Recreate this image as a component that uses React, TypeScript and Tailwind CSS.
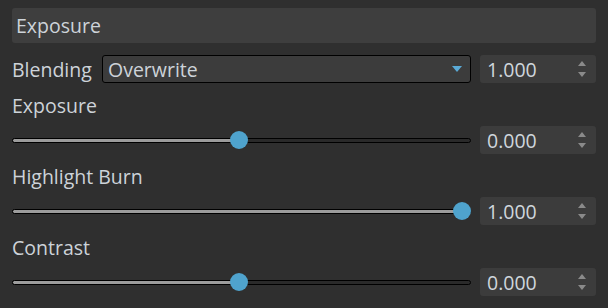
const font = { fontFamily: '"Open Sans", "Noto Sans", sans-serif' };

const SpinArrows = () => (
  <div className="flex flex-col items-center gap-[6px] pr-[10px]">
    <svg width="8" height="5" viewBox="0 0 8 5">
      <path d="M4 0 L8 5 L0 5 Z" fill="#8a8a8a" />
    </svg>
    <svg width="8" height="5" viewBox="0 0 8 5">
      <path d="M0 0 L8 0 L4 5 Z" fill="#8a8a8a" />
    </svg>
  </div>
);

const SpinBox = ({ value }: { value: string }) => (
  <div className="ml-[9px] flex h-[28px] w-[116px] shrink-0 items-center justify-between rounded-[3px] bg-[#3c3c3c]">
    <span className="pl-[7px] pt-[2px] text-[19.5px] leading-none text-[#cfd6dc]">{value}</span>
    <SpinArrows />
  </div>
);

const Slider = ({ pct }: { pct: number }) => (
  <div className="relative h-[18px] flex-1">
    <div className="absolute left-0 right-0 top-[7px] h-[5px] rounded-full border border-black bg-[#2a2a2a]" />
    <div
      className="absolute left-0 top-[7px] h-[5px] rounded-l-full border border-black bg-[#9c9c9c]"
      style={{ width: `${pct}%` }}
    />
    <div
      className="absolute top-0 h-[18px] w-[18px] -translate-x-1/2 rounded-full bg-[#4fa3cd]"
      style={{ left: `${pct}%` }}
    />
  </div>
);

const SliderGroup = ({ label, pct, value }: { label: string; pct: number; value: string }) => (
  <div>
    <div className="flex h-[43px] items-center pt-[2px] text-[19.5px] text-[#cdd3d9]">{label}</div>
    <div className="flex h-[28px] items-center">
      <Slider pct={pct} />
      <SpinBox value={value} />
    </div>
  </div>
);

export default function App() {
  return (
    <div className="h-[308px] w-[608px] bg-[#2f2f2f] px-[12px] pt-[8px]" style={font}>
      <div className="flex h-[35px] items-center rounded-[3px] bg-[#3e3e3e] pl-[4px] pt-[1px] text-[19.5px] text-[#cdd3d9]">
        Exposure
      </div>

      <div className="mt-[12px] flex h-[28px] items-center">
        <span className="w-[90px] shrink-0 pt-[2px] text-[19.5px] text-[#cdd3d9]">Blending</span>
        <div className="flex h-[28px] flex-1 items-center justify-between rounded-[3px] border border-black bg-[#3c3c3c] pl-[5px] pr-[8px]">
          <span className="pt-[2px] text-[19.5px] text-[#cdd3d9]">Overwrite</span>
          <svg width="10" height="6" viewBox="0 0 10 6">
            <path d="M0 0 L10 0 L5 6 Z" fill="#5aaad6" />
          </svg>
        </div>
        <SpinBox value="1.000" />
      </div>

      <SliderGroup label="Exposure" pct={49.5} value="0.000" />
      <SliderGroup label="Highlight Burn" pct={98} value="1.000" />
      <SliderGroup label="Contrast" pct={49.5} value="0.000" />
    </div>
  );
}
